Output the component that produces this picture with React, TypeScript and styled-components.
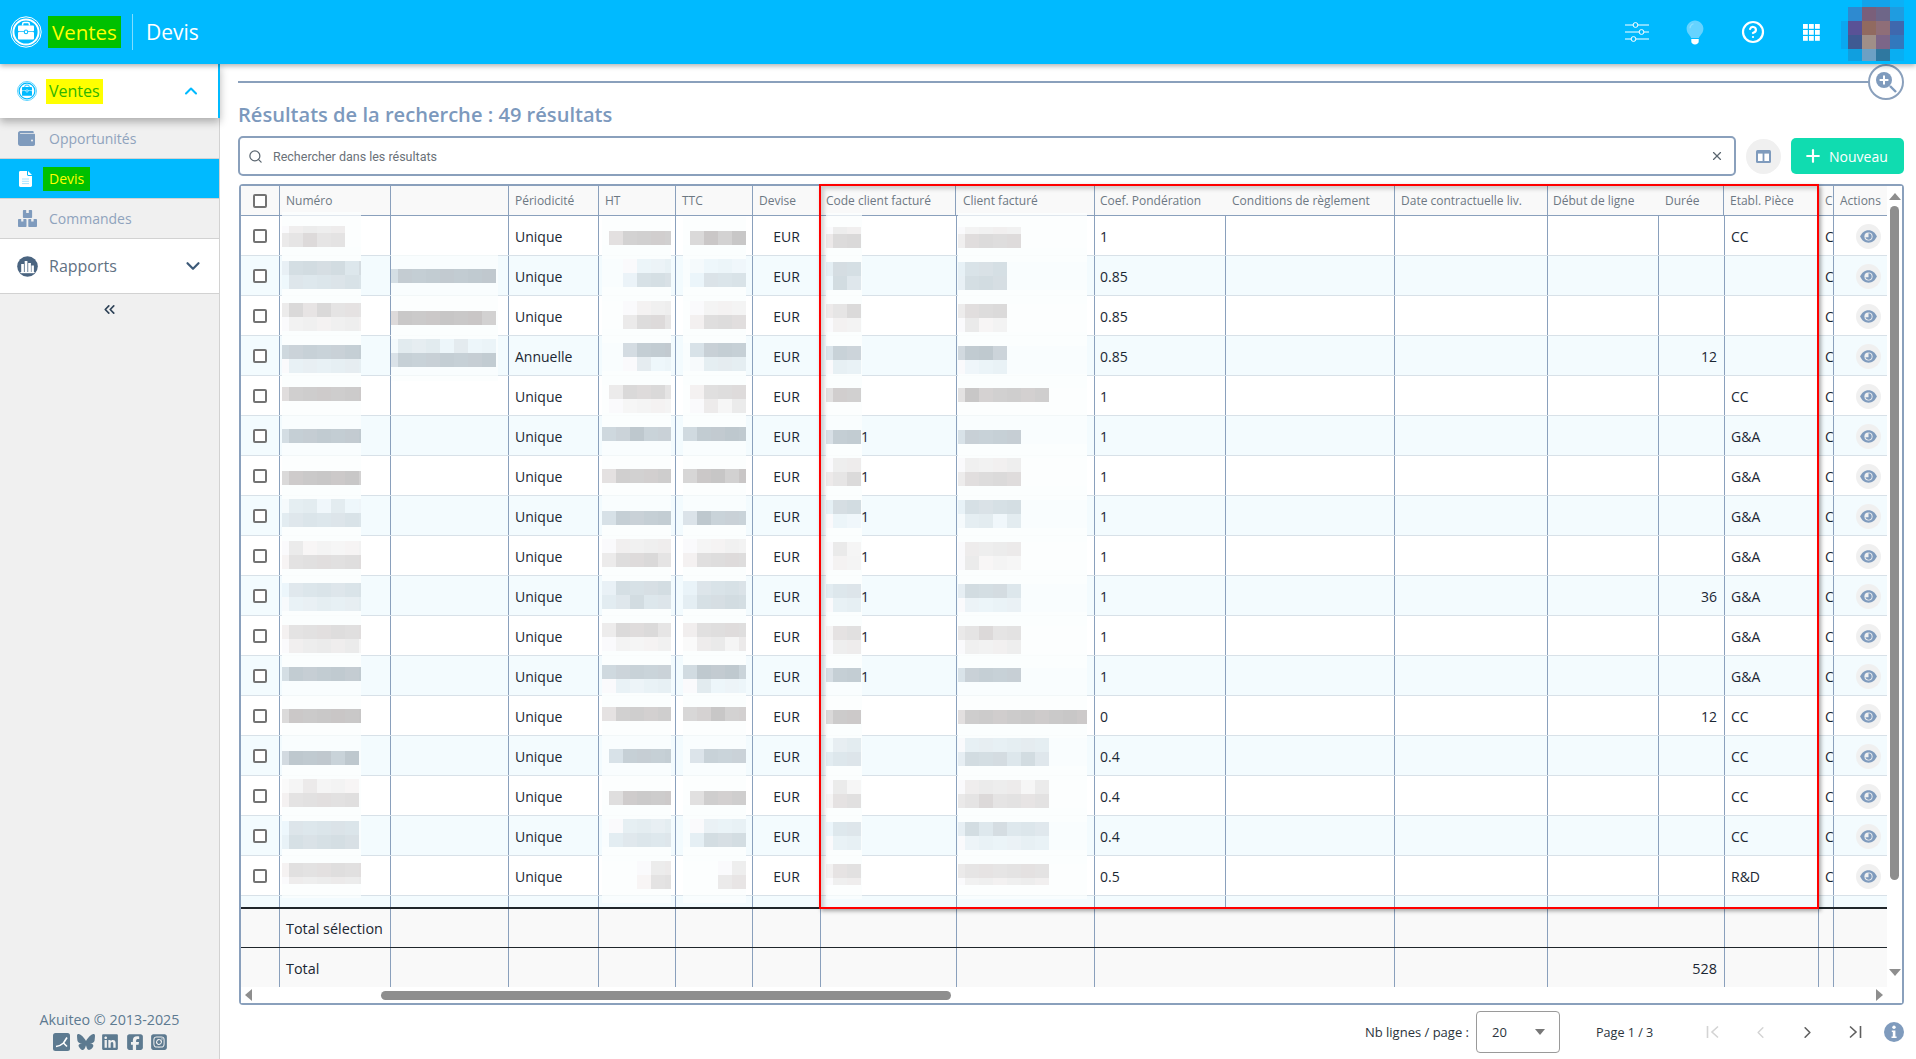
import React from "react";
import styled, { createGlobalStyle } from "styled-components";
import { ChevronUp, ChevronDown, ChevronsLeft, ChevronLeft, ChevronRight, CircleHelp, Search, X, Plus } from "lucide-react";
import { FaBluesky, FaLinkedin, FaSquareFacebook, FaSquareInstagram } from "react-icons/fa6";

const BLUE = "#00baff";
const LINE = "#8aa0bc";
const ICON = "#7f9bbd";
const FONT = `"Open Sans", "Noto Sans", sans-serif`;

const Global = createGlobalStyle`
  html, body { margin: 0; padding: 0; height: 100%; overflow: hidden; background: #fff; }
  body { font-family: ${FONT}; font-size: 14px; color: #1b2733; }
  * { box-sizing: border-box; }
`;

const Page = styled.div`
  display: flex;
  flex-direction: column;
  height: 100vh;
`;

/* ---------- Top bar ---------- */
const TopBar = styled.header`
  position: relative;
  z-index: 5;
  flex: 0 0 64px;
  display: flex;
  align-items: center;
  background: ${BLUE};
  box-shadow: 0 2px 5px rgba(0, 0, 0, 0.3);
  color: #fff;
  padding-left: 10px;
  padding-right: 12px;
`;
const Highlight = styled.span<{ $bg: string; $fg: string; $size: number; $h: number; $pad: number }>`
  display: inline-flex;
  align-items: center;
  height: ${(p) => p.$h}px;
  padding: 0 ${(p) => p.$pad}px;
  background: ${(p) => p.$bg};
  color: ${(p) => p.$fg};
  font-size: ${(p) => p.$size}px;
`;
const BrandLogo = styled.div`
  width: 32px;
  height: 32px;
  margin-right: 6px;
`;
const TopDivider = styled.div`
  width: 1px;
  height: 36px;
  margin: 0 13px 0 11px;
  background: rgba(255, 255, 255, 0.5);
`;
const TopTitle = styled.span`
  font-size: 21px;
`;
const TopActions = styled.div`
  margin-left: auto;
  display: flex;
  align-items: center;
`;
const TopIcon = styled.div<{ $w: number }>`
  width: ${(p) => p.$w}px;
  display: flex;
  justify-content: center;
  align-items: center;
`;
const Avatar = styled.div`
  display: grid;
  grid-template-columns: 7px repeat(4, 14px);
  grid-template-rows: 7px 14px 14px 14px 12px;
  margin-left: 1px;
  margin-bottom: 3px;
`;
const AvatarPixel = styled.span<{ $c: string }>`
  background: ${(p) => p.$c};
`;

const Body = styled.div`
  flex: 1;
  display: flex;
  min-height: 0;
`;

/* ---------- Sidebar ---------- */
const Side = styled.aside`
  flex: 0 0 220px;
  display: flex;
  flex-direction: column;
  background: #f0f0f0;
  border-right: 1px solid #d2d2d2;
`;
const Group = styled.div<{ $active?: boolean }>`
  position: relative;
  height: ${(p) => (p.$active ? 54 : 55)}px;
  display: flex;
  align-items: center;
  padding-left: 17px;
  background: #fff;
  font-size: 16px;
  color: #5f7183;
  gap: ${(p) => (p.$active ? 9 : 11)}px;
  ${(p) =>
    p.$active
      ? `border-right: 2px solid ${BLUE}; margin-right: -1px; box-shadow: 0 4px 8px rgba(0,0,0,.28); z-index: 1;`
      : `border-bottom: 1px solid #d2d2d2;`}
`;
const GroupChevron = styled.span<{ $right: number }>`
  margin-left: auto;
  margin-right: ${(p) => p.$right}px;
  display: flex;
`;
const SubItem = styled.div<{ $h: number; $active?: boolean }>`
  height: ${(p) => p.$h}px;
  display: flex;
  align-items: center;
  border-bottom: 1px solid #d2d2d2;
  font-size: 14px;
  color: #8fa3bd;
  padding-left: ${(p) => (p.$active ? 19 : 18)}px;
  background: ${(p) => (p.$active ? BLUE : "transparent")};
`;
const SubIcon = styled.span<{ $w: number }>`
  width: ${(p) => p.$w}px;
  display: flex;
  align-items: center;
`;
const Collapse = styled.div`
  height: 30px;
  display: flex;
  justify-content: center;
  align-items: center;
  color: #2f4358;
`;
const SideFoot = styled.div`
  margin-top: auto;
  padding-bottom: 8px;
  display: flex;
  flex-direction: column;
  align-items: center;
  color: #5d7a90;
  font-size: 14.3px;
  line-height: 20px;
`;
const Socials = styled.div`
  display: flex;
  align-items: center;
  gap: 6.5px;
  margin: 3px 0 0 2px;
  height: 18px;
  font-size: 18px;
`;

/* ---------- Content ---------- */
const Main = styled.main`
  position: relative;
  flex: 1;
  min-width: 0;
  display: flex;
  flex-direction: column;
  padding: 17px 12px 0 19px;
`;
const Rule = styled.div`
  height: 2px;
  margin: 0 22px 0 -1px;
  background: ${LINE};
`;
const ZoomBadge = styled.div`
  position: absolute;
  top: 0;
  right: 12px;
  width: 36px;
  height: 36px;
  border-radius: 50%;
  background: #fff;
  border: 2px solid ${LINE};
  display: flex;
  align-items: center;
  justify-content: center;
`;
const Title = styled.h1`
  margin: 18px 0 7px -1px;
  font-size: 20.1px;
  line-height: 28px;
  font-weight: 600;
  color: #7c99bd;
`;
const SearchRow = styled.div`
  display: flex;
  align-items: center;
  height: 40px;
  margin-left: -1px;
`;
const SearchBox = styled.div`
  flex: 1;
  height: 40px;
  display: flex;
  align-items: center;
  border: 2px solid ${LINE};
  border-radius: 5px;
  padding: 0 10px 0 8px;
  color: #5b6670;
`;
const SearchText = styled.span`
  flex: 1;
  margin-left: 10px;
  font-family: Roboto, sans-serif;
  font-size: 12.5px;
  color: #6a7178;
`;
const RoundBtn = styled.div`
  width: 35px;
  height: 35px;
  margin: 0 10px;
  border-radius: 50%;
  background: #f0f0f0;
  display: flex;
  align-items: center;
  justify-content: center;
`;
const NewBtn = styled.div`
  width: 113px;
  height: 36px;
  border-radius: 5px;
  background: #10dcb0;
  color: #fff;
  display: flex;
  align-items: center;
  padding-left: 12px;
  gap: 6px;
  font-size: 14px;
`;

/* ---------- Table ---------- */
const Frame = styled.div`
  position: relative;
  margin-top: 8px;
  height: 821px;
  border: 2px solid ${LINE};
  border-radius: 4px;
  display: grid;
  grid-template-columns: 1646px 1fr;
  grid-template-rows: 801px 16px;
`;
const Grid = styled.div`
  position: relative;
  overflow: hidden;
  grid-column: 1;
  grid-row: 1;
`;
const BODY_COLS = "39px 111px 118px 90px 77px 77px 68px 136px 138px 131px 169px 153px 111px 66px 94px 15px 53px";
const HEAD_COLS = "39px 111px 118px 90px 77px 77px 68px 135px 139px 131px 169px 153px 111px 65px 95px 15px 53px";
const HeadRow = styled.div`
  display: grid;
  grid-template-columns: ${HEAD_COLS};
  height: 30px;
  background: #f9f9f9;
  border-bottom: 1px solid ${LINE};
`;
const HeadCell = styled.div<{ $plain?: boolean; $pad?: number }>`
  display: flex;
  align-items: center;
  padding-left: ${(p) => p.$pad ?? 6}px;
  overflow: hidden;
  white-space: nowrap;
  font-size: 12px;
  color: #6d7883;
  border-right: ${(p) => (p.$plain ? "none" : `1px solid ${LINE}`)};
`;
const CheckCell = styled.div`
  display: flex;
  align-items: center;
  justify-content: center;
  border-right: 1px solid ${LINE};
`;
const Check = styled.span`
  width: 14px;
  height: 14px;
  border: 2px solid #737373;
  border-radius: 2px;
  background: #fff;
`;
const Row = styled.div<{ $alt: boolean; $h?: number }>`
  display: grid;
  grid-template-columns: ${BODY_COLS};
  height: ${(p) => p.$h ?? 40}px;
  background: ${(p) => (p.$alt ? "#f3fbfe" : "#fff")};
  border-bottom: ${(p) => (p.$h ? "none" : "1px solid #d8e1e8")};
`;
const Cell = styled.div<{ $align?: string; $plain?: boolean; $pad?: number }>`
  position: relative;
  display: flex;
  align-items: center;
  justify-content: ${(p) => p.$align ?? "flex-start"};
  padding: 1px ${(p) => (p.$align === "flex-end" ? 7 : 0)}px 0 ${(p) => p.$pad ?? (p.$align ? 0 : 6)}px;
  white-space: nowrap;
  font-size: 14px;
  color: #1b2733;
  border-right: ${(p) => (p.$plain ? "none" : `1px solid ${LINE}`)};
`;
const ClipCell = styled(Cell)`
  overflow: hidden;
`;
const ActionCell = styled.div`
  display: flex;
  align-items: center;
  justify-content: flex-end;
  padding: 1px 6px 0 0;
`;
const EyeBtn = styled.span`
  width: 25px;
  height: 25px;
  border-radius: 50%;
  background: #f0f0f0;
  display: flex;
  align-items: center;
  justify-content: center;
`;
const FootRow = styled.div<{ $first?: boolean }>`
  display: grid;
  grid-template-columns: ${BODY_COLS};
  height: ${(p) => (p.$first ? 41 : 39)}px;
  background: #f9f9f9;
  border-top: ${(p) => (p.$first ? "2px solid #20262b" : "none")};
  border-bottom: ${(p) => (p.$first ? "1px solid #20262b" : "none")};
`;
const FootCell = styled(Cell)`
  font-size: 14.4px;
`;
const MosaicBox = styled.div`
  position: absolute;
  z-index: 1;
  padding: 14px 0;
  background: rgba(251, 253, 253, 0.75);
`;
const TileRow = styled.div`
  display: flex;
`;
const Tile = styled.span`
  display: block;
`;
const VTrack = styled.div`
  grid-column: 2;
  grid-row: 1 / span 2;
  display: flex;
  flex-direction: column;
  align-items: center;
  padding-top: 6px;
  background: #fff;
`;
const Thumb = styled.div`
  width: 9px;
  height: 674px;
  margin-top: 5px;
  border-radius: 5px;
  background: #8e8e8e;
`;
const DownSlot = styled.div`
  margin-top: auto;
  margin-bottom: 22px;
`;
const HTrack = styled.div`
  grid-column: 1;
  grid-row: 2;
  display: flex;
  align-items: center;
  padding: 0 4px 0 3px;
  background: #fff;
`;
const HThumb = styled.div`
  width: 570px;
  height: 9px;
  margin-left: 129px;
  margin-right: auto;
  border-radius: 5px;
  background: #8e8e8e;
`;
const RedMark = styled.div`
  position: absolute;
  z-index: 2;
  left: 578px;
  top: -2px;
  width: 1000px;
  height: 725px;
  border: 2px solid #f00;
  pointer-events: none;
  box-shadow: 2px 2px 4px rgba(0, 0, 0, 0.35), inset 3px 3px 4px rgba(0, 0, 0, 0.18);
`;

/* ---------- Pagination ---------- */
const Pager = styled.div`
  flex: 1;
  display: flex;
  align-items: center;
  justify-content: flex-end;
  font-size: 13px;
  color: #2b343c;
`;
const PageSize = styled.div`
  width: 84px;
  height: 42px;
  margin: 0 36px 0 7px;
  border: 1px solid #9a9a9a;
  border-radius: 4px;
  display: flex;
  align-items: center;
  justify-content: space-between;
  padding: 0 14px 0 15px;
`;
const PageLabel = styled.span`
  width: 59px;
  white-space: nowrap;
  font-size: 12.6px;
`;
const PageNav = styled.span<{ $off?: boolean; $ml: number }>`
  display: flex;
  align-items: center;
  margin-left: ${(p) => p.$ml}px;
  color: ${(p) => (p.$off ? "#d4d4d4" : "#5f5f5f")};
`;

/* ---------- Drawings ---------- */
const Case = ({ fill, clasp }: { fill: string; clasp: string }) => (
  <g>
    <path d="M12.6 9.5V8.2c0-.9.7-1.6 1.6-1.6h3.6c.9 0 1.6.7 1.6 1.6v1.3" fill="none" stroke={fill} strokeWidth="1.5" />
    <rect x="8" y="9.6" width="16" height="5.6" rx="1" fill={fill} />
    <rect x="8" y="16" width="16" height="7.6" rx="1" fill={fill} />
    <rect x="14.4" y="14.2" width="3.2" height="3.4" rx=".6" fill={fill} stroke={clasp} strokeWidth="1" />
  </g>
);
const Logo = ({ size, color, back }: { size: number; color: string; back: string }) => (
  <svg width={size} height={size} viewBox="0 0 32 32">
    <circle cx="16" cy="16" r="15.2" fill="none" stroke={color} strokeWidth="1" />
    <circle cx="16" cy="16" r="12.6" fill="none" stroke={color} strokeWidth="2" />
    <Case fill={color} clasp={back} />
  </svg>
);
const SlidersIcon = () => (
  <svg width="26" height="20" viewBox="0 0 26 20" fill="none" stroke="#fff" strokeWidth="1">
    <path d="M1 3h8.5M13.5 3h11.5M1 10h14.5M20 10h5M1 17h6.5M12 17h13" />
    <circle cx="11.5" cy="3" r="2.4" />
    <circle cx="17.5" cy="10" r="2.4" />
    <circle cx="9.5" cy="17" r="2.4" />
  </svg>
);
const BulbIcon = () => (
  <svg width="18" height="25" viewBox="0 0 18 25">
    <path d="M9 .5C4.3.5.6 4.2.6 8.8c0 3.1 1.6 5 3 6.7.8 1 1.4 1.7 1.5 2.5h7.8c.1-.8.7-1.5 1.5-2.5 1.4-1.7 3-3.6 3-6.7C17.4 4.2 13.7.5 9 .5z" fill="#66d3ff" />
    <path d="M5.3 19h7.4v2.6c0 1.6-1.6 2.9-3.7 2.9s-3.7-1.3-3.7-2.9z" fill="#fff" />
    <path d="M4 8.3c.1-2.4 1.6-4 3.5-4.6" fill="none" stroke="#8fe0ff" strokeWidth="1.2" />
  </svg>
);
const AppsIcon = () => (
  <svg width="17" height="17" viewBox="0 0 17 17" fill="#fff">
    {[0, 6, 12].map((y) => [0, 6, 12].map((x) => <rect key={`${x}-${y}`} x={x} y={y} width="4.8" height="4.8" />))}
  </svg>
);
const WalletIcon = () => (
  <svg width="17" height="15" viewBox="0 0 17 15">
    <path d="M2.2 0h12.6c.5 0 .9.4.9.9V2H2.4c-.5 0-.7.6 0 .7H16c.6 0 1 .4 1 1v9.6c0 .9-.7 1.7-1.7 1.7H2.2C1 15 0 14 0 12.8V2.2C0 1 1 0 2.2 0z" fill={ICON} />
    <circle cx="14" cy="9.4" r="1" fill="#f0f0f0" />
  </svg>
);
const DocIcon = () => (
  <svg width="13" height="16" viewBox="0 0 13 16">
    <path d="M1.4 0H8v3.6c0 .8.6 1.4 1.4 1.4H13v9.6c0 .8-.6 1.4-1.4 1.4H1.4C.6 16 0 15.4 0 14.6V1.4C0 .6.6 0 1.4 0z" fill="#fff" />
    <path d="M9 0l4 4H9.6c-.3 0-.6-.3-.6-.6z" fill="#fff" />
    <path d="M3 8h7M3 10.3h7M3 12.6h7" stroke="#a8e4ff" strokeWidth="1" />
  </svg>
);
const BoxesIcon = () => (
  <svg width="19" height="17" viewBox="0 0 19 17" fill={ICON}>
    <path d="M5.6 0h2.6v3h2.6V0h2.6c.4 0 .7.3.7.7v6.6c0 .4-.3.7-.7.7H5.600c-.4 0-.7-.3-.7-.7V.7c0-.4.3-.7.7-.7z" />
    <path d="M.8 9h2.4v2.6h2.2V9h2.4c.4 0 .7.3.7.7v6.6c0 .4-.3.7-.7.7H.8c-.4 0-.8-.3-.8-.7V9.7c0-.4.4-.7.8-.7z" />
    <path d="M11 9h2.2v2.6h2.4V9h2.600c.4 0 .8.3.8.7v6.6c0 .4-.4.7-.8.7H11c-.4 0-.7-.3-.7-.7V9.7c0-.4.3-.7.7-.7z" />
  </svg>
);
const ReportIcon = () => (
  <svg width="21" height="21" viewBox="0 0 21 21">
    <circle cx="10.5" cy="10.5" r="10.3" fill="#4a6480" />
    <rect x="4.2" y="8" width="2.7" height="8" fill="#fff" />
    <rect x="7.7" y="5" width="2.7" height="11" fill="#fff" />
    <rect x="11.2" y="7" width="2.7" height="9" fill="#fff" />
    <rect x="14.5" y="9.5" width="2.4" height="6.5" fill="#fff" />
    <rect x="3.4" y="16" width="14.2" height="1.2" fill="#fff" />
  </svg>
);
const AkuiteoIcon = () => (
  <svg width="17" height="18" viewBox="0 0 17 18">
    <rect width="17" height="18" rx="2.5" fill="#5d7a90" />
    <path d="M3 13.5c3-.4 5.600-1.700 7.600-3.500M14 4.500L10.500 10l3.500 3.500" fill="none" stroke="#fff" strokeWidth="1.6" />
  </svg>
);
const ZoomIcon = () => (
  <svg width="24" height="24" viewBox="0 0 24 24">
    <circle cx="10" cy="10" r="8" fill={ICON} />
    <path d="M10 5.6v8.8M5.6 10h8.800" stroke="#fff" strokeWidth="2" />
    <path d="M16 16l6 6" stroke={ICON} strokeWidth="2.4" />
  </svg>
);
const ColsIcon = () => (
  <svg width="15" height="13" viewBox="0 0 15 13">
    <rect width="15" height="13" rx="1.5" fill={ICON} />
    <rect x="2" y="3.6" width="4.6" height="7.4" fill="#fff" />
    <rect x="8.4" y="3.6" width="4.6" height="7.4" fill="#fff" />
  </svg>
);
const EyeIcon = () => (
  <svg width="17" height="13" viewBox="0 0 17 13">
    <path d="M8.5.3C4.7.3 1.7 2.700.2 6.500c1.500 3.800 4.500 6.200 8.300 6.200s6.800-2.400 8.300-6.200C15.300 2.700 12.300.3 8.500.3z" fill={ICON} />
    <circle cx="8.5" cy="6.5" r="4.1" fill="#f0f0f0" />
    <path d="M8.5 3.300a3.200 3.200 0 1 1-3.100 4h3.100z" fill={ICON} />
  </svg>
);
const Arrow = ({ dir }: { dir: "up" | "down" | "left" | "right" }) => {
  const d = { up: "M0 8L6 1l6 7z", down: "M0 1l6 7 6-7z", left: "M8 0L1 6l7 6z", right: "M1 0l7 6-7 6z" }[dir];
  const vertical = dir === "up" || dir === "down";
  return (
    <svg width={vertical ? 12 : 8} height={vertical ? 9 : 12}>
      <path d={d} fill="#8e8e8e" />
    </svg>
  );
};
const Edge = ({ flip, color }: { flip?: boolean; color: string }) => (
  <svg width="16" height="16" viewBox="0 0 16 16" fill="none" stroke={color} strokeWidth="1.6">
    <path d={flip ? "M13.5 2v12M3 2.500L9 8l-6 5.500" : "M2.5 2v12M13 2.500L7 8l6 5.500"} />
  </svg>
);
const InfoIcon = () => (
  <svg width="20" height="20" viewBox="0 0 20 20">
    <circle cx="10" cy="10" r="10" fill={ICON} />
    <circle cx="10" cy="5.2" r="1.7" fill="#fff" />
    <path d="M7.8 8.400h3.600v6h1.200v1.500H7.500v-1.500h1.300v-4.500H7.800z" fill="#fff" />
  </svg>
);

/* ---------- Blurred patches ---------- */
const TONES: Record<string, { white: number[]; alt: number[] }> = {
  d: { white: [205, 204, 204], alt: [196, 206, 212] },
  m: { white: [224, 223, 223], alt: [216, 226, 231] },
  l: { white: [240, 240, 240], alt: [232, 241, 245] },
};
function tileColor(level: string, alt: boolean, seed: number, first: boolean) {
  const tone = TONES[level.toLowerCase()][alt ? "alt" : "white"];
  const h = ((seed * 2654435761) >>> 0) % 13;
  const j = h - 6 + (first ? 16 : 0);
  const tint = seed % 3 === 0 ? 2 : 0;
  return `rgb(${Math.min(250, tone[0] + j + tint)},${Math.min(250, tone[1] + j)},${Math.min(252, tone[2] + j)})`;
}
function tileWidths(start: number, end: number, first: number) {
  const out = [first];
  let x = start + first;
  while (x < end) {
    const w = Math.min(14, end - x);
    out.push(w);
    x += w;
  }
  return out;
}
function Mosaic(props: {
  k: number;
  col: number;
  cellX: number;
  haloX: number;
  haloEnd: number;
  start: number;
  end: number;
  y: number;
  rows: string;
  first?: number;
}) {
  const { k, col, cellX, haloX, haloEnd, start, end, y, rows } = props;
  const alt = k % 2 === 1;
  const widths = tileWidths(start, end, props.first ?? 7);
  return (
    <MosaicBox style={{ left: haloX - cellX, top: y - (216 + 40 * k) - 14, width: haloEnd - haloX }}>
      {rows.split("").map((lvl, r) => (
        <TileRow key={r} style={{ marginLeft: start - haloX }}>
          {widths.map((w, i) => (
            <Tile
              key={i}
              style={{
                width: w,
                height: lvl === lvl.toUpperCase() ? 7 : 14,
                background: tileColor(lvl, alt, k * 97 + col * 41 + r * 23 + i * 7 + 3, i === 0),
              }}
            />
          ))}
        </TileRow>
      ))}
    </MosaicBox>
  );
}

const NUM_Y = [226, 261, 303, 345, 387, 429, 471, 499, 541, 583, 625, 667, 709, 751, 779, 821, 863];
const NUM_R = ["Lm", "mm", "ml", "dl", "d", "d", "d", "lm", "lm", "ml", "ml", "d", "d", "d", "lm", "mm", "mL"];
const NUM_END = [345, 361, 361, 361, 361, 361, 361, 361, 361, 361, 361, 361, 361, 359, 359, 359, 361];
const AMT_Y = [231, 259, 301, 343, 385, 427, 469, 511, 539, 581, 623, 665, 707, 749, 791, 819, 861];
const AMT_R = ["d", "lm", "lm", "dl", "ml", "d", "d", "d", "lm", "mm", "ml", "dl", "d", "d", "d", "lm", "lm"];
const HT_X = [609, 623, 623, 623, 609, 602, 602, 602, 602, 602, 602, 602, 602, 609, 609, 609, 637];
const TTC_X = [690, 690, 690, 690, 690, 683, 683, 683, 683, 683, 683, 683, 683, 690, 690, 690, 718];
const CODE_Y = [227, 262, 304, 346, 388, 430, 458, 500, 542, 584, 626, 668, 710, 738, 780, 822, 864];
const CODE_R = ["Lm", "mm", "ml", "dl", "d", "d", "lm", "ml", "ll", "ml", "ml", "d", "d", "lm", "lm", "ml", "mL"];
const CLIENT_END = [1021, 1007, 1007, 1007, 1049, 1021, 1021, 1021, 1021, 1021, 1021, 1021, 1087, 1049, 1049, 1049, 1049];
const EXTRA: Record<number, { y: number; r: string }> = {
  1: { y: 269, r: "d" },
  2: { y: 311, r: "d" },
  3: { y: 339, r: "ld" },
};

type Data = { p: string; c: string; d?: string; e?: string; one?: boolean };
const ROWS: Data[] = [
  { p: "Unique", c: "1", e: "CC" },
  { p: "Unique", c: "0.85" },
  { p: "Unique", c: "0.85" },
  { p: "Annuelle", c: "0.85", d: "12" },
  { p: "Unique", c: "1", e: "CC" },
  { p: "Unique", c: "1", e: "G&A", one: true },
  { p: "Unique", c: "1", e: "G&A", one: true },
  { p: "Unique", c: "1", e: "G&A", one: true },
  { p: "Unique", c: "1", e: "G&A", one: true },
  { p: "Unique", c: "1", d: "36", e: "G&A", one: true },
  { p: "Unique", c: "1", e: "G&A", one: true },
  { p: "Unique", c: "1", e: "G&A", one: true },
  { p: "Unique", c: "0", d: "12", e: "CC" },
  { p: "Unique", c: "0.4", e: "CC" },
  { p: "Unique", c: "0.4", e: "CC" },
  { p: "Unique", c: "0.4", e: "CC" },
  { p: "Unique", c: "0.5", e: "R&D" },
];

const HEADERS: { t: string; plain?: boolean; pad?: number }[] = [
  { t: "Numéro" },
  { t: "" },
  { t: "Périodicité" },
  { t: "HT" },
  { t: "TTC" },
  { t: "Devise" },
  { t: "Code client facturé", pad: 5 },
  { t: "Client facturé", pad: 7 },
  { t: "Coef. Pondération", plain: true, pad: 5 },
  { t: "Conditions de règlement" },
  { t: "Date contractuelle liv." },
  { t: "Début de ligne", plain: true, pad: 5 },
  { t: "Durée" },
  { t: "Etabl. Pièce" },
  { t: "C" },
];

const AVATAR = [
  ["#00baff", "#00baff", "#13a3ea", "#13a3ea", "#0cb0f6"],
  ["#00baff", "#2e8ad0", "#7a5f7a", "#6e6688", "#1f9ce0"],
  ["#0aa8f0", "#5a5296", "#916a60", "#8f6e78", "#3f68ae"],
  ["#0aa8f0", "#3f5a92", "#a08f88", "#7c6688", "#3278bd"],
  ["#00baff", "#109fdf", "#6da0c4", "#2f78a0", "#09aef2"],
];

const FOOT_COLUMNS = Array.from({ length: 17 }, (_, i) => i);

function FooterRow({ label, total, first }: { label: string; total?: string; first?: boolean }) {
  return (
    <FootRow $first={first}>
      {FOOT_COLUMNS.map((i) => (
        <FootCell key={i} $plain={i === 9 || i === 12 || i === 16} $align={i === 13 ? "flex-end" : undefined}>
          {i === 1 ? label : i === 13 ? total : null}
        </FootCell>
      ))}
    </FootRow>
  );
}

export default function App() {
  return (
    <Page>
      <Global />
      <TopBar>
        <BrandLogo>
          <Logo size={32} color="#fff" back={BLUE} />
        </BrandLogo>
        <Highlight $bg="#00c000" $fg="#ffff00" $size={20.5} $h={32} $pad={4}>
          Ventes
        </Highlight>
        <TopDivider />
        <TopTitle>Devis</TopTitle>
        <TopActions>
          <TopIcon $w={58}>
            <SlidersIcon />
          </TopIcon>
          <TopIcon $w={58}>
            <BulbIcon />
          </TopIcon>
          <TopIcon $w={58}>
            <CircleHelp size={24} strokeWidth={2.2} />
          </TopIcon>
          <TopIcon $w={58}>
            <AppsIcon />
          </TopIcon>
          <Avatar>
            {AVATAR.flat().map((c, i) => (
              <AvatarPixel key={i} $c={c} />
            ))}
          </Avatar>
        </TopActions>
      </TopBar>
      <Body>
        <Side>
          <Group $active>
            <Logo size={20} color={BLUE} back="#fff" />
            <Highlight $bg="#ffff00" $fg="#2fb500" $size={16} $h={25} $pad={3}>
              Ventes
            </Highlight>
            <GroupChevron $right={17}>
              <ChevronUp size={20} color={BLUE} strokeWidth={2.5} />
            </GroupChevron>
          </Group>
          <SubItem $h={41}>
            <SubIcon $w={31}>
              <WalletIcon />
            </SubIcon>
            Opportunités
          </SubItem>
          <SubItem $h={40} $active>
            <SubIcon $w={24}>
              <DocIcon />
            </SubIcon>
            <Highlight $bg="#00c000" $fg="#ffff00" $size={14} $h={24} $pad={6}>
              Devis
            </Highlight>
          </SubItem>
          <SubItem $h={40}>
            <SubIcon $w={31}>
              <BoxesIcon />
            </SubIcon>
            Commandes
          </SubItem>
          <Group>
            <ReportIcon />
            Rapports
            <GroupChevron $right={15}>
              <ChevronDown size={22} color="#3d5a78" strokeWidth={2.4} />
            </GroupChevron>
          </Group>
          <Collapse>
            <ChevronsLeft size={17} strokeWidth={2.4} />
          </Collapse>
          <SideFoot>
            Akuiteo © 2013-2025
            <Socials>
              <AkuiteoIcon />
              <FaBluesky color="#5d7a90" />
              <FaLinkedin color="#5d7a90" />
              <FaSquareFacebook color="#5d7a90" />
              <FaSquareInstagram color="#5d7a90" />
            </Socials>
          </SideFoot>
        </Side>
        <Main>
          <Rule />
          <ZoomBadge>
            <ZoomIcon />
          </ZoomBadge>
          <Title>Résultats de la recherche : 49 résultats</Title>
          <SearchRow>
            <SearchBox>
              <Search size={15} strokeWidth={2} />
              <SearchText>Rechercher dans les résultats</SearchText>
              <X size={14} strokeWidth={2} />
            </SearchBox>
            <RoundBtn>
              <ColsIcon />
            </RoundBtn>
            <NewBtn>
              <Plus size={20} strokeWidth={2.6} />
              Nouveau
            </NewBtn>
          </SearchRow>
          <Frame>
            <Grid>
              <HeadRow>
                <CheckCell>
                  <Check />
                </CheckCell>
                {HEADERS.map((h, i) => (
                  <HeadCell key={i} $plain={h.plain} $pad={h.pad}>
                    {h.t}
                  </HeadCell>
                ))}
                <HeadCell $plain>Actions</HeadCell>
              </HeadRow>
              {ROWS.map((r, k) => (
                <Row key={k} $alt={k % 2 === 1}>
                  <CheckCell>
                    <Check />
                  </CheckCell>
                  <Cell>
                    <Mosaic k={k} col={1} cellX={280} haloX={282} haloEnd={361} start={282} end={NUM_END[k]} y={NUM_Y[k]} rows={NUM_R[k]} />
                  </Cell>
                  <Cell>
                    {EXTRA[k] && (
                      <Mosaic k={k} col={2} cellX={391} haloX={391} haloEnd={498} start={391} end={496} y={EXTRA[k].y} rows={EXTRA[k].r} />
                    )}
                  </Cell>
                  <Cell>{r.p}</Cell>
                  <Cell>
                    <Mosaic k={k} col={3} cellX={599} haloX={602} haloEnd={671} start={HT_X[k]} end={671} y={AMT_Y[k]} rows={AMT_R[k]} first={14} />
                  </Cell>
                  <Cell>
                    <Mosaic k={k} col={4} cellX={676} haloX={683} haloEnd={746} start={TTC_X[k]} end={746} y={AMT_Y[k]} rows={AMT_R[k]} first={14} />
                  </Cell>
                  <Cell $align="center">EUR</Cell>
                  <Cell $pad={r.one ? 40 : 6}>
                    <Mosaic k={k} col={5} cellX={821} haloX={826} haloEnd={862} start={826} end={861} y={CODE_Y[k]} rows={CODE_R[k]} />
                    {r.one ? "1" : ""}
                  </Cell>
                  <Cell>
                    <Mosaic k={k} col={6} cellX={957} haloX={958} haloEnd={1087} start={958} end={CLIENT_END[k]} y={CODE_Y[k]} rows={CODE_R[k]} />
                  </Cell>
                  <Cell $pad={5}>{r.c}</Cell>
                  <Cell />
                  <Cell />
                  <Cell />
                  <Cell $align="flex-end">{r.d}</Cell>
                  <Cell>{r.e}</Cell>
                  <ClipCell>C</ClipCell>
                  <ActionCell>
                    <EyeBtn>
                      <EyeIcon />
                    </EyeBtn>
                  </ActionCell>
                </Row>
              ))}
              <Row $alt $h={11}>
                {Array.from({ length: 16 }).map((_, i) => (
                  <Cell key={i} />
                ))}
              </Row>
              <FooterRow label="Total sélection" first />
              <FooterRow label="Total" total="528" />
            </Grid>
            <VTrack>
              <Arrow dir="up" />
              <Thumb />
              <DownSlot>
                <Arrow dir="down" />
              </DownSlot>
            </VTrack>
            <HTrack>
              <Arrow dir="left" />
              <HThumb />
              <Arrow dir="right" />
            </HTrack>
            <RedMark />
          </Frame>
          <Pager>
            Nb lignes / page :
            <PageSize>
              20
              <svg width="10" height="6">
                <path d="M0 0h10L5 6z" fill="#777" />
              </svg>
            </PageSize>
            <PageLabel>Page 1 / 3</PageLabel>
            <PageNav $off $ml={50}>
              <Edge color="#d4d4d4" />
            </PageNav>
            <PageNav $off $ml={30}>
              <ChevronLeft size={19} strokeWidth={1.8} />
            </PageNav>
            <PageNav $ml={28}>
              <ChevronRight size={19} strokeWidth={2} />
            </PageNav>
            <PageNav $ml={30}>
              <Edge flip color="#5f5f5f" />
            </PageNav>
            <PageNav $ml={21}>
              <InfoIcon />
            </PageNav>
          </Pager>
        </Main>
      </Body>
    </Page>
  );
}
